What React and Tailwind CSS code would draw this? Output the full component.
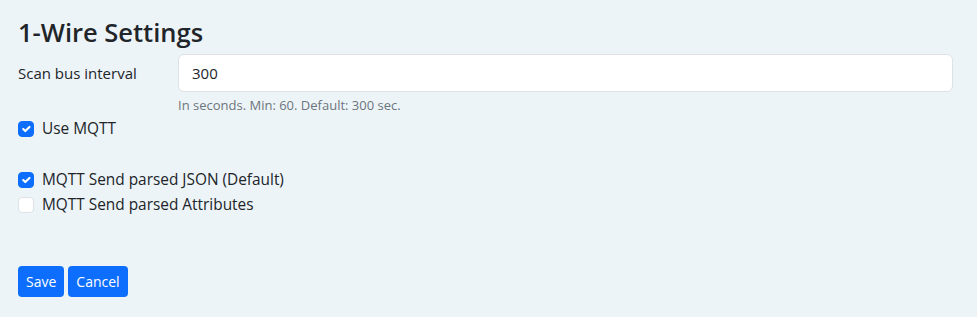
import React from "react";

function Check({ checked, label }) {
  return (
    <label className="flex items-center gap-2 h-6">
      <span
        className={
          "w-4 h-4 rounded-[4px] border flex items-center justify-center " +
          (checked ? "bg-[#0d6efd] border-[#0d6efd]" : "bg-white border-[#dee2e6]")
        }
      >
        {checked && (
          <svg viewBox="0 0 20 20" className="w-4 h-4">
            <path d="M6 10l3 3 6-6" fill="none" stroke="#fff" strokeWidth="3" strokeLinecap="round" strokeLinejoin="round" />
          </svg>
        )}
      </span>
      <span className="text-[15.4px]">{label}</span>
    </label>
  );
}

export default function App() {
  return (
    <div
      className="min-h-screen bg-[#edf4f8] text-[#212529] text-[15px] px-[18px] pt-[14px]"
      style={{ fontFamily: "'Open Sans', 'Noto Sans', sans-serif" }}
    >
      <h3 className="text-[25.5px] font-semibold leading-[36px] mb-[4px]">1-Wire Settings</h3>
      <div className="flex">
        <div className="w-[160px] pt-[7px] leading-[24px]">Scan bus interval</div>
        <div className="flex-1 mr-[6px]">
          <input
            className="w-full h-[38px] bg-white border border-[#dee2e6] rounded-[6px] px-[13px] outline-none"
            defaultValue="300"
          />
          <div className="text-[13px] text-[#6c757d] mt-[3px] leading-[21px]">
            In seconds. Min: 60. Default: 300 sec.
          </div>
        </div>
      </div>
      <div className="mt-[1px]">
        <Check checked label="Use MQTT" />
      </div>
      <div className="mt-[27px] flex flex-col gap-[1px]">
        <Check checked label="MQTT Send parsed JSON (Default)" />
        <Check label="MQTT Send parsed Attributes" />
      </div>
      <div className="mt-[49px] flex gap-[4px]">
        <button className="h-[31px] px-[8px] rounded-[4px] bg-[#0d6efd] text-white text-[14px]">Save</button>
        <button className="h-[31px] px-[8px] rounded-[4px] bg-[#0d6efd] text-white text-[14px]">Cancel</button>
      </div>
    </div>
  );
}
